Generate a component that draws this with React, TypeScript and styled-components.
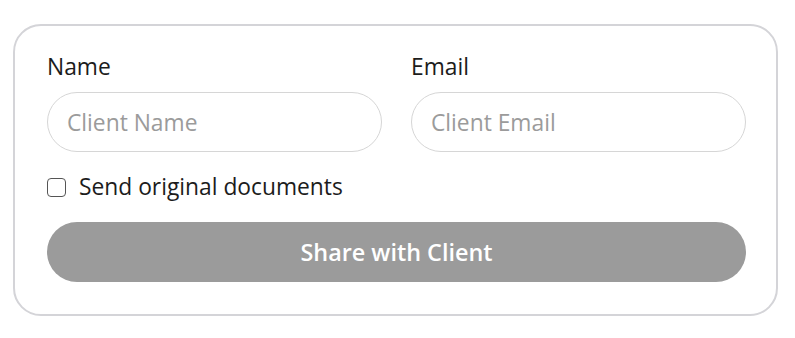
import React, { useState } from 'react';
import styled, { createGlobalStyle } from 'styled-components';

const GlobalStyle = createGlobalStyle`
  body {
    margin: 0;
    background: #fff;
    font-family: "Open Sans", "Noto Sans", sans-serif;
  }
`;

const ShareForm = () => {
  const [name, setName] = useState('');
  const [email, setEmail] = useState('');
  const [sendOriginals, setSendOriginals] = useState(false);

  const handleSubmit = (event: React.FormEvent<HTMLFormElement>) => {
    event.preventDefault();
  };

  return (
    <Card onSubmit={handleSubmit}>
      <Fields>
        <Field>
          <Label htmlFor="client-name">Name</Label>
          <Input
            id="client-name"
            placeholder="Client Name"
            value={name}
            onChange={(event) => setName(event.target.value)}
          />
        </Field>
        <Field>
          <Label htmlFor="client-email">Email</Label>
          <Input
            id="client-email"
            type="email"
            placeholder="Client Email"
            value={email}
            onChange={(event) => setEmail(event.target.value)}
          />
        </Field>
      </Fields>
      <CheckRow>
        <Checkbox
          type="checkbox"
          checked={sendOriginals}
          onChange={(event) => setSendOriginals(event.target.checked)}
        />
        Send original documents
      </CheckRow>
      <Button type="submit" disabled={!name || !email}>
        Share with Client
      </Button>
    </Card>
  );
};

const App = () => (
  <>
    <GlobalStyle />
    <ShareForm />
  </>
);

const Card = styled.form`
  box-sizing: border-box;
  width: 765px;
  margin: 24px 0 0 13px;
  padding: 26px 30px 32px 32px;
  border: 2px solid #d4d4d8;
  border-radius: 28px;
  display: flex;
  flex-direction: column;
`;

const Fields = styled.div`
  display: grid;
  grid-template-columns: 1fr 1fr;
  column-gap: 29px;
`;

const Field = styled.div`
  display: flex;
  flex-direction: column;
  gap: 10px;
`;

const Label = styled.label`
  font-size: 22.8px;
  line-height: 30px;
  color: #1c1c1c;
`;

const Input = styled.input`
  box-sizing: border-box;
  height: 60px;
  padding: 0 19px;
  border: 1px solid #d6d6d6;
  border-radius: 30px;
  font-family: inherit;
  font-size: 22.8px;
  color: #1c1c1c;
  outline: none;

  &::placeholder {
    color: #9b9b9b;
  }
`;

const CheckRow = styled.label`
  display: flex;
  align-items: center;
  gap: 13px;
  margin-top: 20px;
  font-size: 22.8px;
  line-height: 30px;
  color: #1c1c1c;
  cursor: pointer;
`;

const Checkbox = styled.input`
  appearance: none;
  box-sizing: border-box;
  margin: 0;
  width: 19px;
  height: 19px;
  border: 1.5px solid #555;
  border-radius: 4px;
  background: #fff;
  cursor: pointer;

  &:checked {
    background: #555;
  }
`;

const Button = styled.button`
  margin-top: 20px;
  height: 60px;
  border: none;
  border-radius: 30px;
  background: #9b9b9b;
  color: #fff;
  font-family: inherit;
  font-size: 23.4px;
  font-weight: 600;
  cursor: pointer;

  &:disabled {
    cursor: default;
  }
`;

export default App;
